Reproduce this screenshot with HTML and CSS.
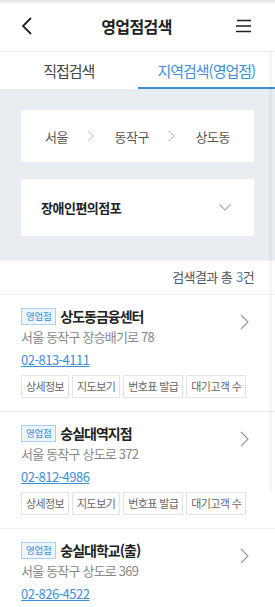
FILE: index.html
```html
<!DOCTYPE html>
<html lang="ko">
<head>
<meta charset="utf-8">
<link rel="stylesheet" href="styles.css">
</head>
<body>
<div class="page">
  <header class="topbar">
    <span class="icon-btn">
      <svg width="14" height="20" viewBox="0 0 14 20"><path d="M11 2 L3 10 L11 18" fill="none" stroke="#222" stroke-width="1.8"/></svg>
    </span>
    <h1 class="title">영업점검색</h1>
    <span class="icon-btn">
      <svg width="18" height="14" viewBox="0 0 18 14"><path d="M2 1.5 H16 M1 7 H16 M1 12.5 H16" stroke="#222" stroke-width="1.6"/></svg>
    </span>
  </header>
  <nav class="tabs">
    <div class="tab">직접검색</div>
    <div class="tab active">지역검색(영업점)</div>
  </nav>
  <section class="filters">
    <div class="box crumbs">
      <span>서울</span>
      <svg class="sep" width="8" height="12" viewBox="0 0 8 12"><path d="M1 1 L6 6 L1 11" fill="none" stroke="#bbb" stroke-width="1"/></svg>
      <span>동작구</span>
      <svg class="sep" width="8" height="12" viewBox="0 0 8 12"><path d="M1 1 L6 6 L1 11" fill="none" stroke="#bbb" stroke-width="1"/></svg>
      <span>상도동</span>
    </div>
    <div class="box select">
      <span class="select-label">장애인편의점포</span>
      <svg width="12" height="7" viewBox="0 0 12 7"><path d="M0.5 0.5 L6 6 L11.5 0.5" fill="none" stroke="#aaa" stroke-width="1.1"/></svg>
    </div>
  </section>
  <div class="count">검색결과 총 <em>3</em>건</div>
  <ul class="list">
    <li class="item">
      <div class="item-body">
        <div class="name-row"><span class="badge">영업점</span><span class="name">상도동금융센터</span></div>
        <div class="addr">서울 동작구 장승배기로 78</div>
        <a class="tel">02-813-4111</a>
        <div class="actions"><span>상세정보</span><span>지도보기</span><span>번호표 발급</span><span>대기고객 수</span></div>
      </div>
      <svg class="go" width="9" height="16" viewBox="0 0 9 16"><path d="M1 1 L8 8 L1 15" fill="none" stroke="#999" stroke-width="1.2"/></svg>
    </li>
    <li class="item">
      <div class="item-body">
        <div class="name-row"><span class="badge">영업점</span><span class="name">숭실대역지점</span></div>
        <div class="addr">서울 동작구 상도로 372</div>
        <a class="tel">02-812-4986</a>
        <div class="actions"><span>상세정보</span><span>지도보기</span><span>번호표 발급</span><span>대기고객 수</span></div>
      </div>
      <svg class="go" width="9" height="16" viewBox="0 0 9 16"><path d="M1 1 L8 8 L1 15" fill="none" stroke="#999" stroke-width="1.2"/></svg>
    </li>
    <li class="item">
      <div class="item-body">
        <div class="name-row"><span class="badge">영업점</span><span class="name">숭실대학교(출)</span></div>
        <div class="addr">서울 동작구 상도로 369</div>
        <a class="tel">02-826-4522</a>
        <div class="actions"><span>상세정보</span><span>지도보기</span><span>번호표 발급</span><span>대기고객 수</span></div>
      </div>
      <svg class="go" width="9" height="16" viewBox="0 0 9 16"><path d="M1 1 L8 8 L1 15" fill="none" stroke="#999" stroke-width="1.2"/></svg>
    </li>
  </ul>
  <div class="scrollbar"></div>
</div>
</body>
</html>
```
FILE: styles.css
```css
* { box-sizing: border-box; }
html, body { margin: 0; padding: 0; background: #fff; }
body {
  font-family: "Noto Sans CJK KR", "Noto Sans", sans-serif;
  color: #222;
  width: 275px;
  overflow: hidden;
}
.page { position: relative; }
.topbar {
  height: 52px;
  display: flex;
  align-items: center;
  justify-content: space-between;
  padding: 0 22px 0 20px;
  border-bottom: 1px solid #ececec;
  background: linear-gradient(#e4e4e4 0, #fff 5px, #fff 100%);
}
.icon-btn { display: flex; align-items: center; width: 18px; }
.title {
  margin: 0;
  font-size: 16px;
  font-weight: 700;
  letter-spacing: -0.6px;
}
.tabs {
  display: flex;
  height: 37px;
}
.tab {
  flex: 1;
  display: flex;
  align-items: center;
  justify-content: center;
  font-size: 15px;
  color: #444;
  letter-spacing: -1px;
  border-bottom: 2px solid transparent;
  padding-top: 2px;
}
.tab.active {
  color: #3d8fd8;
  border-bottom-color: #3d8fd8;
}
.filters {
  background: #e9ecf0;
  padding: 21px 21px 25px;
  display: flex;
  flex-direction: column;
  gap: 17px;
}
.box {
  background: #fff;
  display: flex;
  align-items: center;
}
.crumbs {
  height: 52px;
  justify-content: space-between;
  padding: 0 24px 0 24px;
  font-size: 13px;
  color: #555;
  letter-spacing: -0.5px;
}
.select {
  height: 57px;
  justify-content: space-between;
  padding: 0 23px 0 20px;
}
.select-label { font-size: 13px; font-weight: 700; color: #222; letter-spacing: -0.5px; }
.count {
  height: 34px;
  display: flex;
  align-items: center;
  justify-content: flex-end;
  padding: 0 21px 2px;
  font-size: 13px;
  color: #555;
  letter-spacing: -0.6px;
  border-bottom: 1px solid #ececec;
}
.count em { font-style: normal; color: #3d8fd8; margin-left: 4px; }
.list { list-style: none; margin: 0; padding: 0; }
.item {
  display: flex;
  justify-content: space-between;
  padding: 12px 26px 13px 21px;
  border-bottom: 1px solid #eeeeee;
}
.item-body { flex: 1; min-width: 0; }
.go { flex-shrink: 0; margin-top: 7px; }
.name-row { display: flex; align-items: center; height: 18px; }
.badge {
  font-size: 9.5px;
  color: #3d8fd8;
  background: #eef6fd;
  border: 1px solid #a9d2f0;
  padding: 0 4px;
  height: 17px;
  line-height: 15px;
  margin-right: 4px;
  letter-spacing: -0.3px;
}
.name { font-size: 14px; font-weight: 700; letter-spacing: -1px; color: #222; }
.addr {
  font-size: 13px;
  color: #888;
  margin-top: 2px;
  line-height: 19px;
  letter-spacing: -0.8px;
}
.tel {
  display: block;
  font-size: 13px;
  color: #3d8fd8;
  text-decoration: underline;
  line-height: 19px;
  margin-top: 4px;
  letter-spacing: -0.5px;
}
.actions { display: flex; gap: 3px; margin-top: 6px; }
.actions span {
  flex-shrink: 0;
  font-size: 11px;
  color: #666;
  border: 1px solid #e3e3e3;
  height: 23px;
  line-height: 21px;
  padding: 0 4px;
  letter-spacing: -0.6px;
  white-space: nowrap;
}
.scrollbar {
  position: absolute;
  right: 3px;
  top: 52px;
  width: 3px;
  height: 440px;
  background: rgba(0,0,0,0.035);
}
```
